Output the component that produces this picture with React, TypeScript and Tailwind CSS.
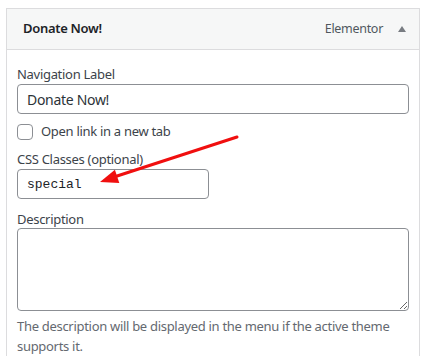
import React from 'react';

const font = { fontFamily: '"Noto Sans", "Open Sans", sans-serif', letterSpacing: '-0.3px' };

const MenuItemPanel = () => {
  return (
    <div className="relative bg-white min-h-[356px] px-[6px] pt-2" style={font}>
      <div className="border border-b-0 border-[#dcdcde]">
        <div className="h-[41px] bg-[#f6f7f7] border-b border-[#dcdcde] flex items-center pl-4 pr-3">
          <span className="text-[13px] font-semibold text-[#1d2327] flex-1">Donate Now!</span>
          <span className="text-[12.5px] text-[#50575e]">Elementor</span>
          <svg width="8" height="6" viewBox="0 0 8 6" className="ml-[15px] mr-[1px]">
            <polygon points="4,0 8,6 0,6" fill="#787c82" />
          </svg>
        </div>

        <div className="px-[10px] pt-[15px] pb-2">
          <label className="block text-[13px] leading-[18px] text-[#3c434a] mb-[1px]">Navigation Label</label>
          <input
            readOnly
            value="Donate Now!"
            className="block w-full h-[30px] border border-[#8c8f94] rounded-[4px] px-[9px] text-[14px] text-[#2c3338] outline-none"
          />

          <div className="flex items-center gap-2 mt-[10px] h-4">
            <span className="w-4 h-4 border border-[#8c8f94] rounded-[4px]" />
            <span className="text-[13px] text-[#3c434a]">Open link in a new tab</span>
          </div>

          <label className="block text-[13px] leading-[18px] text-[#3c434a] mt-[10px] mb-[1px]">CSS Classes (optional)</label>
          <input
            readOnly
            value="special"
            className="block w-[192px] h-[30px] border border-[#8c8f94] rounded-[4px] px-[9px] text-[13px] text-[#1d2327] outline-none"
            style={{ fontFamily: '"Liberation Mono", "DejaVu Sans Mono", monospace', letterSpacing: '0px' }}
          />

          <label className="block text-[13px] leading-[18px] text-[#3c434a] mt-[11px]">Description</label>
          <textarea
            readOnly
            className="block w-full h-[83px] border border-[#8c8f94] rounded-[4px] outline-none resize"
          />

          <p className="text-[13px] leading-[20px] text-[#646970] mt-[5px]">
            The description will be displayed in the menu if the active theme supports it.
          </p>
        </div>
      </div>

      <svg className="absolute left-0 top-0 pointer-events-none" width="426" height="356">
        <line x1="237" y1="137" x2="114" y2="177" stroke="#f00f0f" strokeWidth="3" strokeLinecap="round" />
        <polygon points="100,182 114.9,169.7 119.3,183.1" fill="#f00f0f" />
      </svg>
    </div>
  );
};

export default function App() {
  return <MenuItemPanel />;
}
